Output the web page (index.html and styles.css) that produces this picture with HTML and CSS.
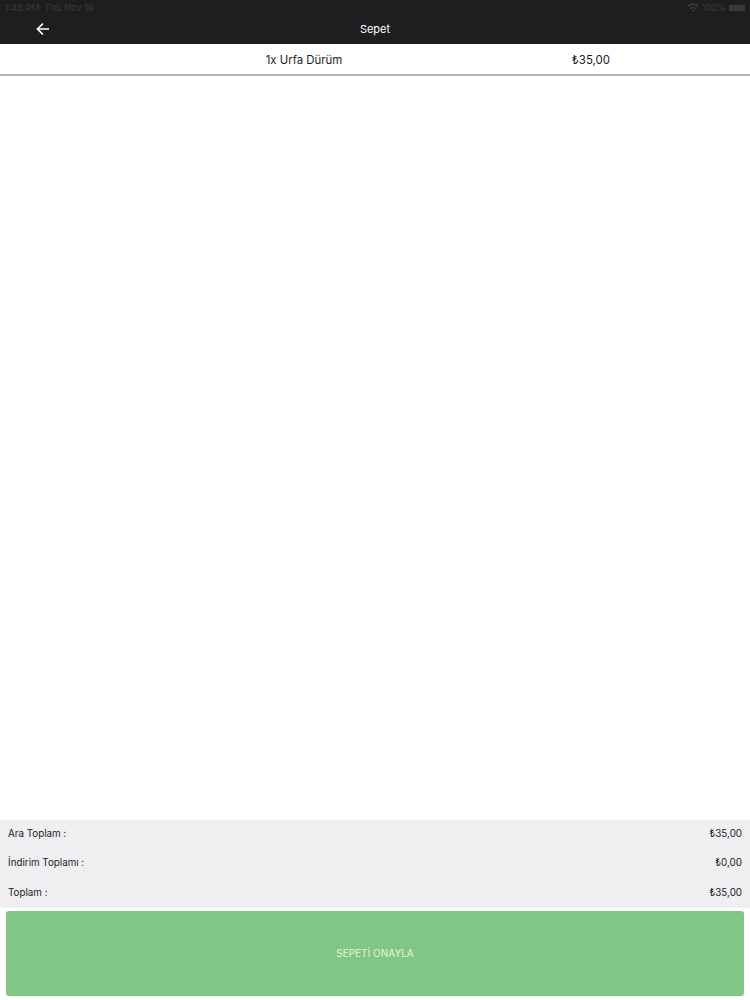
FILE: index.html
```html
<!DOCTYPE html>
<html lang="tr">
<head>
    <meta charset="UTF-8">
    <meta name="viewport" content="width=device-width, initial-scale=1.0">
    <title>Sepet</title>
    <link rel="stylesheet" href="styles.css">
</head>
<body>
    <div class="page">
        <header class="top-bar">
            <div class="status-bar">
                <span>1:45 PM &nbsp;Thu Nov 19</span>
                <div class="status-right">
                    <svg class="wifi" width="12" height="9" viewBox="0 0 12 9">
                        <path d="M0 3 A8.5 8.5 0 0 1 12 3 L10.8 4.2 A6.8 6.8 0 0 0 1.2 4.2 Z" fill="#3a383b"/>
                        <path d="M2.4 5.4 A5 5 0 0 1 9.6 5.4 L8.4 6.6 A3.3 3.3 0 0 0 3.6 6.6 Z" fill="#3a383b"/>
                        <path d="M4.6 7.5 A2 2 0 0 1 7.4 7.5 L6 9 Z" fill="#3a383b"/>
                    </svg>
                    <span>100%</span>
                    <div class="battery"></div>
                </div>
            </div>
            <nav class="nav-bar">
                <svg class="back-icon" width="14" height="14" viewBox="0 0 14 14">
                    <path d="M13 7H2M7 1.5 1.5 7 7 12.5" fill="none" stroke="#fff" stroke-width="1.7"/>
                </svg>
                <div class="nav-title">Sepet</div>
            </nav>
        </header>

        <main class="cart-list">
            <div class="cart-item">
                <div class="cart-item-name">1x Urfa Dürüm</div>
                <div class="cart-item-price">₺35,00</div>
            </div>
        </main>

        <section class="totals">
            <div class="total-row"><span>Ara Toplam :</span><span>₺35,00</span></div>
            <div class="total-row"><span>İndirim Toplamı :</span><span>₺0,00</span></div>
            <div class="total-row"><span>Toplam :</span><span>₺35,00</span></div>
        </section>

        <div class="confirm-wrap">
            <button class="confirm-button">SEPETİ ONAYLA</button>
        </div>
    </div>
</body>
</html>
```

FILE: styles.css
```css
* {
    margin: 0;
    padding: 0;
    box-sizing: border-box;
}

body {
    font-family: Inter, "Noto Sans", sans-serif;
    background-color: white;
    color: #1c1c1e;
}

.page {
    display: flex;
    flex-direction: column;
    height: 1000px;
}

.top-bar {
    background-color: #1f1d20;
    height: 44px;
}

.status-bar {
    display: flex;
    justify-content: space-between;
    align-items: center;
    height: 15px;
    padding: 0 5px;
    font-size: 9.2px;
    color: #3a383b;
}

.status-right {
    display: flex;
    align-items: center;
    gap: 3px;
}

.battery {
    width: 16px;
    height: 6px;
    background-color: #3a383b;
}

.nav-bar {
    display: flex;
    align-items: center;
    justify-content: center;
    position: relative;
    height: 29px;
    padding-bottom: 1px;
}

.back-icon {
    position: absolute;
    left: 36px;
    top: 7px;
}

.nav-title {
    color: white;
    font-size: 11px;
}

.cart-list {
    flex: 1;
}

.cart-item {
    display: grid;
    grid-template-columns: 1fr 1fr;
    align-items: center;
    height: 32px;
    padding-top: 1px;
    border-bottom: 2px solid #b5b5b5;
    font-size: 11.4px;
    text-align: center;
}

.cart-item-name {
    padding-left: 233px;
    white-space: nowrap;
}

.cart-item-price {
    padding-left: 57px;
}

.totals {
    background-color: #efeef1;
}

.total-row {
    display: flex;
    justify-content: space-between;
    align-items: center;
    height: 29.3px;
    padding: 0 8px 2px;
    font-size: 9.8px;
    border-bottom: 1px solid #f3f2f5;
}

.total-row:last-child {
    border-bottom: none;
}

.confirm-wrap {
    padding: 3px 6px 4px;
}

.confirm-button {
    display: block;
    width: 100%;
    height: 85px;
    padding-bottom: 2px;
    background-color: #82c685;
    color: #e3f3dc;
    border: none;
    border-radius: 3px;
    font-family: inherit;
    font-size: 10px;
}
```
